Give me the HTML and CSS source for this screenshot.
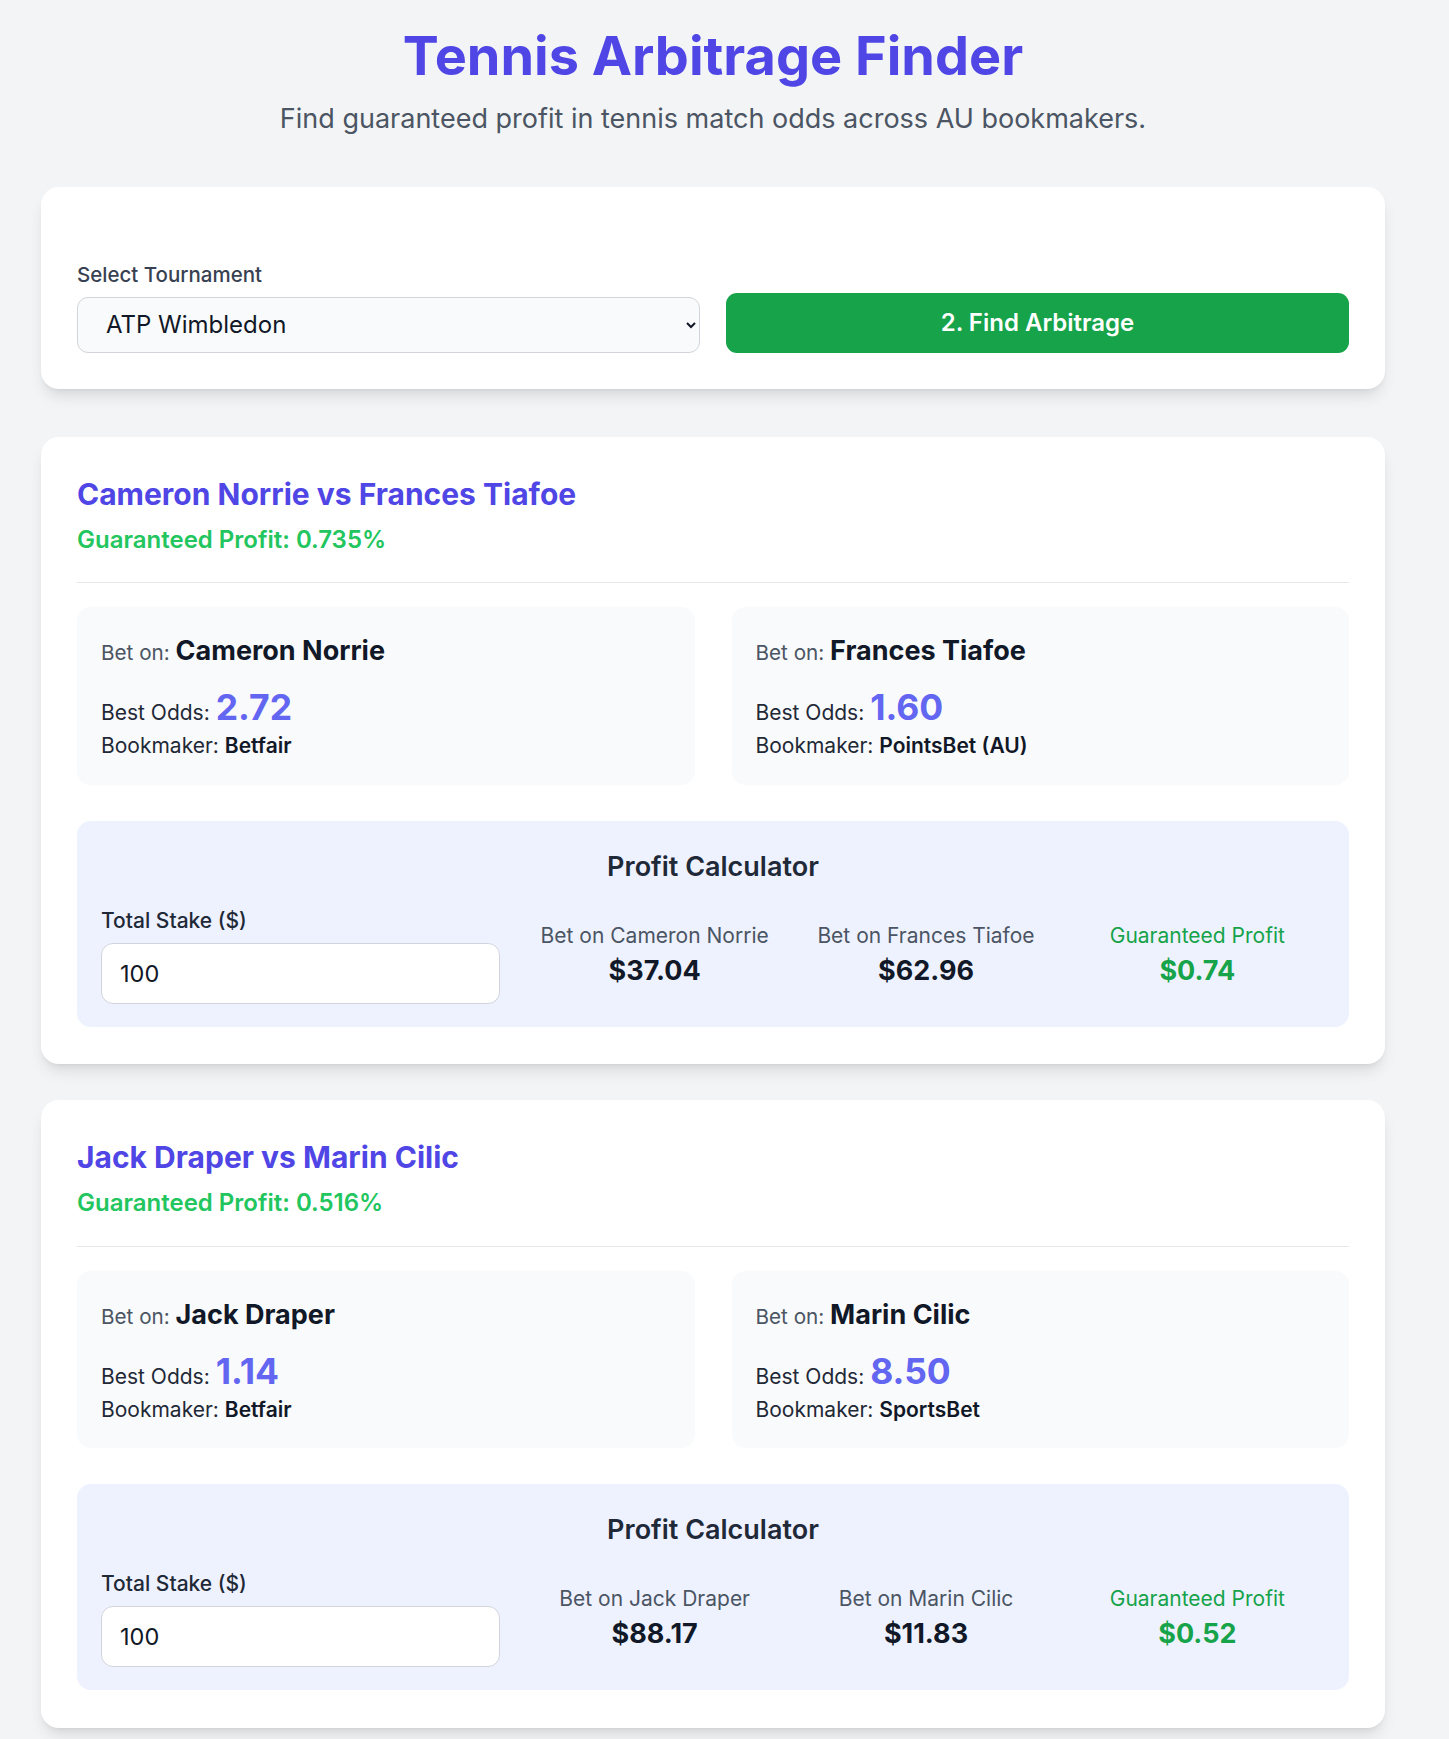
FILE: index.html
```html
<!DOCTYPE html>
<html lang="en">
<head>
<meta charset="utf-8">
<title>Tennis Arbitrage Finder</title>
<link rel="stylesheet" href="styles.css">
</head>
<body>
<main class="container">
  <header class="hero">
    <h1 class="hero-title">Tennis Arbitrage Finder</h1>
    <p class="hero-sub">Find guaranteed profit in tennis match odds across AU bookmakers.</p>
  </header>

  <section class="card controls">
    <div class="field">
      <label class="field-label" for="tournament">Select Tournament</label>
      <select id="tournament" class="select">
        <option>ATP Wimbledon</option>
      </select>
    </div>
    <button class="btn-find" type="button">2. Find Arbitrage</button>
  </section>

  <div class="results">
    <article class="card match">
      <div class="match-head">
        <h2 class="match-title">Cameron Norrie vs Frances Tiafoe</h2>
        <p class="match-profit">Guaranteed Profit: 0.735%</p>
      </div>
      <div class="bets">
        <div class="bet">
          <p class="bet-on">Bet on: <strong>Cameron Norrie</strong></p>
          <p class="bet-odds">Best Odds: <strong>2.72</strong></p>
          <p class="bet-book">Bookmaker: <strong>Betfair</strong></p>
        </div>
        <div class="bet">
          <p class="bet-on">Bet on: <strong>Frances Tiafoe</strong></p>
          <p class="bet-odds">Best Odds: <strong>1.60</strong></p>
          <p class="bet-book">Bookmaker: <strong>PointsBet (AU)</strong></p>
        </div>
      </div>
      <div class="calc">
        <h3 class="calc-title">Profit Calculator</h3>
        <div class="calc-row">
          <div class="stake">
            <label class="stake-label">Total Stake ($)</label>
            <input class="stake-input" type="text" value="100">
          </div>
          <div class="splits">
            <div class="split">
              <p class="split-label">Bet on Cameron Norrie</p>
              <p class="split-value">$37.04</p>
            </div>
            <div class="split">
              <p class="split-label">Bet on Frances Tiafoe</p>
              <p class="split-value">$62.96</p>
            </div>
            <div class="split split-profit">
              <p class="split-label">Guaranteed Profit</p>
              <p class="split-value">$0.74</p>
            </div>
          </div>
        </div>
      </div>
    </article>

    <article class="card match">
      <div class="match-head">
        <h2 class="match-title">Jack Draper vs Marin Cilic</h2>
        <p class="match-profit">Guaranteed Profit: 0.516%</p>
      </div>
      <div class="bets">
        <div class="bet">
          <p class="bet-on">Bet on: <strong>Jack Draper</strong></p>
          <p class="bet-odds">Best Odds: <strong>1.14</strong></p>
          <p class="bet-book">Bookmaker: <strong>Betfair</strong></p>
        </div>
        <div class="bet">
          <p class="bet-on">Bet on: <strong>Marin Cilic</strong></p>
          <p class="bet-odds">Best Odds: <strong>8.50</strong></p>
          <p class="bet-book">Bookmaker: <strong>SportsBet</strong></p>
        </div>
      </div>
      <div class="calc">
        <h3 class="calc-title">Profit Calculator</h3>
        <div class="calc-row">
          <div class="stake">
            <label class="stake-label">Total Stake ($)</label>
            <input class="stake-input" type="text" value="100">
          </div>
          <div class="splits">
            <div class="split">
              <p class="split-label">Bet on Jack Draper</p>
              <p class="split-value">$88.17</p>
            </div>
            <div class="split">
              <p class="split-label">Bet on Marin Cilic</p>
              <p class="split-value">$11.83</p>
            </div>
            <div class="split split-profit">
              <p class="split-label">Guaranteed Profit</p>
              <p class="split-value">$0.52</p>
            </div>
          </div>
        </div>
      </div>
    </article>
  </div>
</main>
</body>
</html>
```

FILE: styles.css
```css
* { box-sizing: border-box; }

html, body {
  margin: 0;
  padding: 0;
}

body {
  background: #f3f4f6;
  font-family: Inter, "Noto Sans", "Liberation Sans", sans-serif;
  color: #111827;
}

.container {
  width: 1344px;
  margin: 0 0 0 41px;
  padding: 23px 0 40px;
}

/* Hero */
.hero {
  text-align: center;
}

.hero-title {
  margin: 0;
  font-size: 54px;
  line-height: 66px;
  font-weight: 700;
  color: #4f46e5;
}

.hero-sub {
  margin: 11.5px 0 0;
  font-size: 27px;
  line-height: 36px;
  color: #4b5563;
}

/* Cards */
.card {
  background: #ffffff;
  border-radius: 18px;
  box-shadow: 0 10px 15px -3px rgba(0, 0, 0, 0.1), 0 4px 6px -4px rgba(0, 0, 0, 0.1);
  padding: 36px;
}

.controls {
  margin-top: 50px;
  padding-top: 74px;
  display: grid;
  grid-template-columns: 1fr 1fr;
  column-gap: 26px;
  align-items: end;
}

.field {
  display: flex;
  flex-direction: column;
}

.field-label {
  font-size: 20.5px;
  line-height: 28px;
  font-weight: 500;
  color: #374151;
  margin-bottom: 8px;
}

.select {
  height: 56px;
  width: 100%;
  padding: 0 22px 0 24px;
  font-family: inherit;
  font-size: 24px;
  color: #111827;
  background: #f9fafb;
  border: 1px solid #d1d5db;
  border-radius: 11px;
}

.btn-find {
  height: 60px;
  width: 100%;
  border: none;
  border-radius: 11px;
  background: #16a34a;
  color: #ffffff;
  font-family: inherit;
  font-size: 24px;
  font-weight: 600;
}

/* Results */
.results {
  margin-top: 48px;
  display: flex;
  flex-direction: column;
  gap: 36px;
}

.match {
  padding-top: 37px;
  padding-bottom: 37.5px;
}

.match-head {
  padding-bottom: 28.5px;
  border-bottom: 1px solid #e5e7eb;
}

.match-title {
  margin: 0;
  font-size: 30px;
  line-height: 41px;
  font-weight: 700;
  color: #4f46e5;
}

.match-profit {
  margin: 11px 0 0;
  font-size: 24px;
  line-height: 28px;
  font-weight: 600;
  color: #22c55e;
}

.bets {
  margin-top: 24px;
  display: grid;
  grid-template-columns: 1fr 1fr;
  gap: 37px;
}

.bet {
  background: #f9fafb;
  border-radius: 14px;
  padding: 24px 24px 24.5px;
}

.bet p { margin: 0; }

.bet-on {
  font-size: 20.7px;
  line-height: 40px;
  color: #4b5563;
}

.bet-on strong {
  font-size: 27px;
  font-weight: 700;
  color: #111827;
}

.bet-odds {
  margin-top: 18px !important;
  font-size: 21px;
  line-height: 34px;
  color: #1f2937;
}

.bet-odds strong {
  font-size: 35.5px;
  font-weight: 700;
  color: #6366f1;
}

.bet-book {
  margin-top: 2px !important;
  font-size: 21px;
  line-height: 28px;
  color: #1f2937;
}

.bet-book strong {
  font-weight: 600;
  color: #111827;
}

/* Calculator */
.calc {
  margin-top: 36px;
  background: #eef2ff;
  border-radius: 14px;
  padding: 26px 24px 23px;
}

.calc-title {
  margin: 0;
  text-align: center;
  font-size: 27px;
  line-height: 40px;
  font-weight: 600;
  color: #1f2937;
}

.calc-row {
  margin-top: 20px;
  display: grid;
  grid-template-columns: 1fr 2fr;
  column-gap: 27px;
  align-items: center;
}

.stake {
  display: flex;
  flex-direction: column;
}

.stake-label {
  font-size: 21px;
  line-height: 28px;
  font-weight: 500;
  color: #1f2937;
}

.stake-input {
  margin-top: 8px;
  height: 61px;
  width: 100%;
  padding: 0 18px;
  font-family: inherit;
  font-size: 23.5px;
  color: #111827;
  background: #ffffff;
  border: 1px solid #d1d5db;
  border-radius: 12px;
}

.splits {
  display: grid;
  grid-template-columns: repeat(3, 1fr);
  column-gap: 16px;
}

.split {
  text-align: center;
}

.split p { margin: 0; }

.split-label {
  font-size: 21px;
  line-height: 28px;
  color: #4b5563;
}

.split-value {
  margin-top: 3px !important;
  font-size: 27px;
  line-height: 36px;
  font-weight: 700;
  color: #111827;
}

.split-profit .split-label,
.split-profit .split-value {
  color: #16a34a;
}
```
